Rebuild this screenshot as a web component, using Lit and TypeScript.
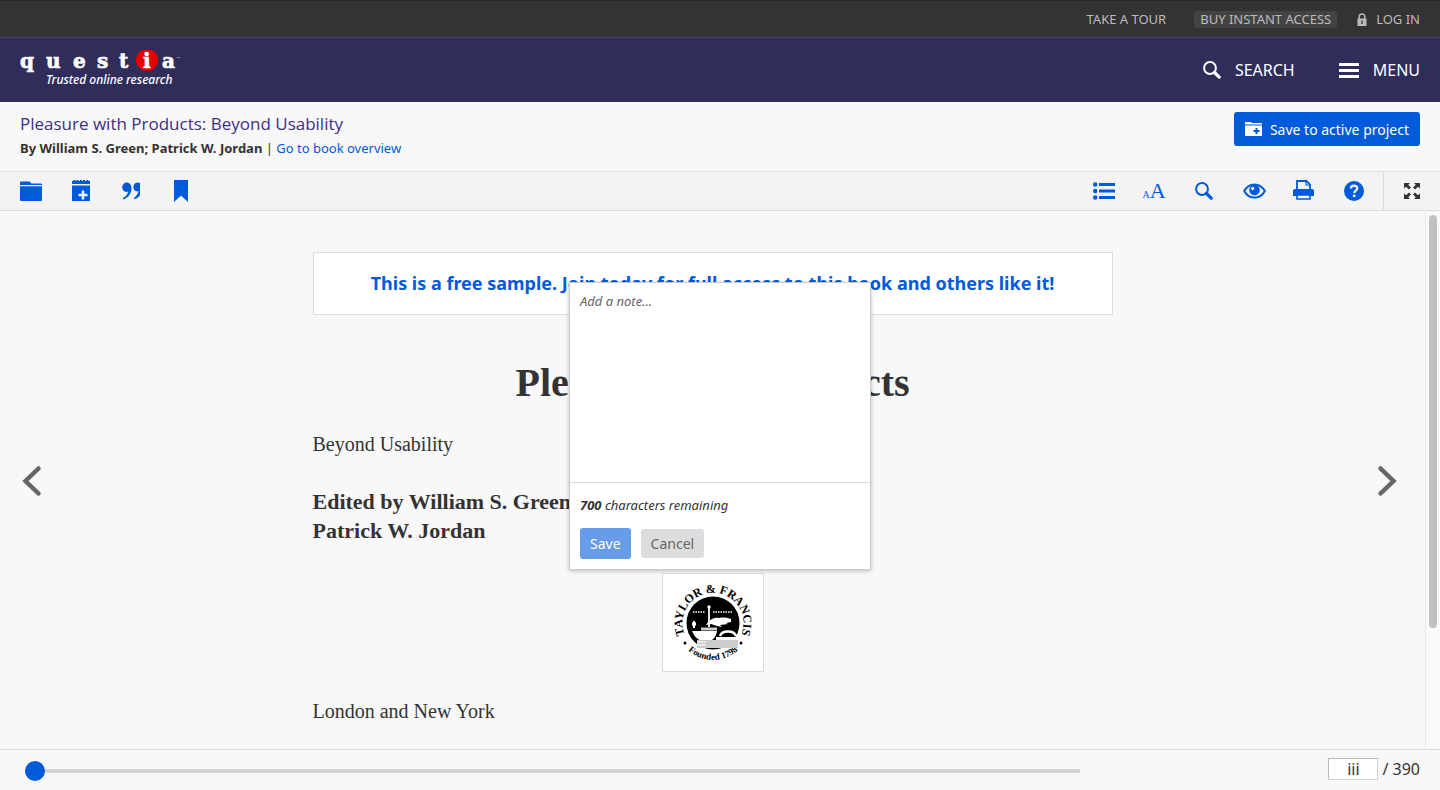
import { LitElement, html, css, svg } from "lit";
import { customElement, state } from "lit/decorators.js";

const MAX_NOTE = 700;

const icons = {
  folder: svg`<svg width="22" height="20" viewBox="0 0 22 20" fill="currentColor"><path d="M1 .5h8.500l2 2H21a1 1 0 0 1 1 1v.5H0V1.500a1 1 0 0 1 1-1zM0 5.300h22V19a1 1 0 0 1-1 1H1a1 1 0 0 1-1-1z"/></svg>`,
  note: svg`<svg width="18" height="22" viewBox="0 0 18 22" fill="currentColor"><path d="M0 1h1.500V0h2v1h1V0h2v1h1.500V0h2v1h1V0h2v1h1.500V0h2v1H18v3H0zM0 5.500h18V21H0z"/><path d="M11 10.500v9M6.500 15h9" stroke="#f3f3f3" stroke-width="2.500"/></svg>`,
  quote: svg`<svg width="18" height="20" viewBox="0 0 18 20" fill="currentColor"><path d="M4.800 1.500C7.500 1.500 9.500 3.800 9.500 7.300c0 5.500-3.500 9.700-8 11.200l-.7-1.200c3.200-1.700 4.900-3.800 5.200-6.700-.5.200-1 .3-1.700.3A4.300 4.300 0 0 1 .3 6.300c0-2.700 2-4.800 4.500-4.800z"/><path d="M16 1.500c-3 0-4.600 2-4.600 4.600s1.600 4.300 3.600 4.300c.6 0 1-.1 1.400-.3-.2 2.900-2 5-4.600 6.900l.7 1.200c2.400-.8 4.200-2.100 5.500-4V1.900a6 6 0 0 0-2-.4z"/></svg>`,
  bookmark: svg`<svg width="14" height="22" viewBox="0 0 14 22" fill="currentColor"><path d="M0 0h14v22l-7-6.500L0 22z"/></svg>`,
  list: svg`<svg width="22" height="18" viewBox="0 0 22 18" fill="currentColor"><circle cx="2.200" cy="2.500" r="2.200"/><circle cx="2.200" cy="9" r="2.200"/><circle cx="2.200" cy="15.500" r="2.200"/><path d="M6 1h16v3H6zM6 7.500h16v3H6zM6 14h16v3H6z"/></svg>`,
  search: svg`<svg width="18" height="18" viewBox="0 0 18 18" fill="none" stroke="currentColor"><circle cx="7" cy="7" r="5.900" stroke-width="2"/><path d="M11.500 11.500l4.700 4.700" stroke-width="3.200" stroke-linecap="round"/></svg>`,
  eye: svg`<svg width="23" height="16" viewBox="0 0 23 16"><path d="M1.200 8C6-.8 17-.8 21.800 8 17 16.800 6 16.800 1.200 8z" fill="none" stroke="currentColor" stroke-width="2"/><circle cx="11.500" cy="7" r="5.300" fill="currentColor"/><circle cx="9.700" cy="5.500" r="1.700" fill="#f3f3f3"/></svg>`,
  print: svg`<svg width="22" height="22" viewBox="0 0 22 22"><path d="M4 11V1h9.500L17 4.500V11" fill="none" stroke="currentColor" stroke-width="1.800"/><path d="M13 1v4h4" fill="none" stroke="currentColor" stroke-width="1.200"/><path d="M2 9h17a2 2 0 0 1 2 2v5H0v-5a2 2 0 0 1 2-2z" fill="currentColor"/><path d="M4 15h13v4H4z" fill="#f3f3f3" stroke="currentColor" stroke-width="1.600"/></svg>`,
  help: svg`<svg width="20" height="20" viewBox="0 0 20 20"><circle cx="10" cy="10" r="10" fill="currentColor"/><path d="M6.900 7.600c0-1.800 1.300-2.900 3.100-2.900s3.200 1 3.200 2.700c0 2.300-2.900 2.300-2.900 4.500" fill="none" stroke="#f3f3f3" stroke-width="2.300"/><circle cx="10.200" cy="14.700" r="1.500" fill="#f3f3f3"/></svg>`,
  full: svg`<svg width="16" height="16" viewBox="0 0 16 16"><path d="M0 0h6L4.200 1.800l2.800 2.700L5 6.500 2 3.800 0 5.500zM16 0v5.500l-2-1.700-3 2.700-2-2 2.800-2.700L10 0zM0 16v-5.500l2 1.700 3-2.700 2 2-2.800 2.700L6 16zM16 16h-6l1.800-1.800L9 11.500l2-2 3 2.700 2-1.700z" fill="currentColor"/></svg>`,
  lock: svg`<svg width="10" height="13" viewBox="0 0 10 13"><path d="M2.200 6V3.700a2.800 2.800 0 0 1 5.600 0V6" fill="none" stroke="currentColor" stroke-width="1.500"/><path d="M.5 5.500h9V13h-9z" fill="currentColor"/><path d="M5 7.500v3.500" stroke="#333" stroke-width="1.300"/></svg>`,
  menu: svg`<svg width="20" height="15" viewBox="0 0 20 15"><path d="M0 0h20v3H0zM0 6h20v3H0zM0 12h20v3H0z" fill="currentColor"/></svg>`,
  saveFolder: svg`<svg width="17" height="14" viewBox="0 0 17 14"><path d="M0 0h5.500L7 1h10v1.500H0zM0 3.500h17V14H0z" fill="#fff"/><path d="M11.500 6v6M8.500 9h6" stroke="#005ad9" stroke-width="2"/></svg>`,
  prev: svg`<svg width="20" height="32" viewBox="0 0 20 32"><path d="M16.500 3.500L3.500 16l13 12.500" fill="none" stroke="#666" stroke-width="4.500" stroke-linecap="round"/></svg>`,
  next: svg`<svg width="20" height="32" viewBox="0 0 20 32"><path d="M3.500 3.500L16.500 16l-13 12.500" fill="none" stroke="#666" stroke-width="4.500" stroke-linecap="round"/></svg>`,
  logo: svg`<svg width="164" height="40" viewBox="0 0 164 40" role="img" aria-label="questia, trusted online research">
    <circle cx="127" cy="10" r="11" fill="#e60000"/>
    <g fill="#fff" stroke="#fff" stroke-width="0.700" font-family="DejaVu Serif, serif" font-weight="700" font-size="20">
      <text y="18" x="0 26 53 77 99 123 142">questia</text>
    </g>
    <text x="157" y="8" fill="#fff" font-size="2" font-family="Noto Sans, sans-serif">TM</text>
    <text x="26" y="34" fill="#fff" font-size="12" font-weight="500" font-style="italic" font-family="Noto Sans, sans-serif">Trusted online research</text>
  </svg>`,
  seal: svg`<svg width="100" height="97" viewBox="0 0 100 97" role="img" aria-label="Taylor &amp; Francis, founded 1798">
    <defs><path id="arc-top" d="M27.200 69.500A30.500 30.500 0 1 1 72.800 69.500"/><path id="arc-low" d="M20 70.600A37 37 0 0 0 80 70.600"/></defs>
    <circle cx="50" cy="49" r="26.500" fill="#000"/>
    <g font-family="Liberation Serif, serif" fill="#000" font-weight="700">
      <text font-size="12"><textPath href="#arc-top" startOffset="50%" text-anchor="middle">TAYLOR &amp; FRANCIS</textPath></text>
      <text font-size="9"><textPath href="#arc-low" startOffset="50%" text-anchor="middle">Founded 1798</textPath></text>
    </g>
    <circle cx="22" cy="69" r="1.500"/><circle cx="78" cy="69" r="1.500"/>
    <path d="M30 38h12M50 38h20" stroke="#fff" stroke-width="1.500" stroke-dasharray="1.500 1"/>
    <path d="M46 33v20" stroke="#fff" stroke-width="1.800"/><circle cx="46" cy="33" r="1.700" fill="#fff"/>
    <path d="M45 48c3-3 7-5 11-4 5-1 9 0 12 1v3l-5 1 2 1-8 1 2 2-5-1-6-2-5 1z" fill="#fff"/>
    <path d="M31 47v7" stroke="#fff" stroke-width="2"/><circle cx="31" cy="50" r="2.200" fill="#fff"/>
    <path d="M29 57h25c-1 6-4 9-7 10H38c-4-2-7-5-9-10z" fill="#fff"/>
    <path d="M38 55h16" stroke="#ccc" stroke-width="3"/>
    <path d="M57 62c2-6 14-6 16 0" fill="none" stroke="#fff" stroke-width="2.500"/><path d="M53 63h21v3H53z" fill="#fff"/>
    <path d="M34 66h41v8H34z" fill="#ccc"/><path d="M34 68h9M34 71h9" stroke="#fff"/>
  </svg>`,
};

@customElement("app-root")
export class AppRoot extends LitElement {
  static styles = css`
    :host { display: flex; flex-direction: column; height: 100vh; overflow: hidden; background: #f8f8f8; color: #333; font-family: "Noto Sans", "Open Sans", sans-serif; font-size: 13px; }
    *, *::before { box-sizing: border-box; }
    a { color: inherit; text-decoration: none; }
    button { font: inherit; color: inherit; background: none; border: 0; padding: 0; cursor: pointer; }
    svg { display: block; flex: none; }
    .top { display: flex; justify-content: flex-end; align-items: center; gap: 20px; height: 37px; padding: 0 20px; background: #333; border-top: 1px solid #262626; color: #bbb; line-height: 17px; }
    .buy { background: #434343; border-radius: 3px; padding: 0 6px; margin-left: 8px; }
    .login { display: flex; align-items: center; gap: 9px; }
    .brand { display: flex; align-items: center; height: 65px; padding: 0 20px; background: #302d5b; border-top: 1px solid #434078; color: #fff; font-size: 16px; }
    .brand nav { display: flex; gap: 44px; margin-left: auto; }
    .brand nav a { display: flex; align-items: center; gap: 14px; }
    .book { display: flex; align-items: flex-start; justify-content: space-between; padding: 10px 20px 11px; }
    .title { margin: 0; font-family: "Open Sans", sans-serif; font-size: 17px; font-weight: 400; line-height: 24px; color: #3e2e85; }
    .byline { margin: 0; line-height: 24px; }
    .byline a { color: #005ad9; }
    .save { display: flex; align-items: center; gap: 8px; height: 34px; padding: 0 11px; border-radius: 3px; background: #005ad9; color: #fff; font-size: 14px; }
    .tools { display: flex; height: 40px; background: #f3f3f3; border: solid #dbdbdb; border-width: 1px 0; color: #005ad9; }
    .tools button { display: flex; align-items: center; justify-content: center; width: 50px; }
    .left { display: flex; padding-left: 6px; }
    .right { display: flex; margin-left: auto; padding-right: 4px; }
    .tools .full { width: 57px; border-left: 1px solid #dbdbdb; color: #333; }
    .size { font-family: "Liberation Serif", serif; font-size: 22px; }
    .size small { font-size: 10px; }
    .reader { position: relative; flex: 1; min-height: 0; display: grid; grid-template-columns: minmax(0, 1fr) 15px; overflow: hidden; }
    .stage { display: grid; grid-template-columns: 26px minmax(0, 800px) 26px; justify-content: space-between; padding: 0 22px; overflow: hidden; }
    .turn { align-self: center; justify-self: start; padding-bottom: 4px; }
    .page { padding-top: 41px; font-family: Georgia, "Liberation Serif", serif; font-size: 20px; line-height: 29px; }
    .sample { display: block; border: 1px solid #dbdbdb; background: #fff; padding: 16px; text-align: center; color: #005ad9; font: 700 18px/29px "Noto Sans", "Open Sans", sans-serif; }
    h1 { margin: 49px 0 28px; font-size: 40px; line-height: 38px; text-align: center; }
    .page p { margin: 0 0 28px; }
    .page .editors { font-size: 22px; font-weight: 700; }
    .seal { display: table; margin: 0 auto 25px; border: 1px solid #dbdbdb; background: #fff; }
    .track { padding: 4px 3px; background: #fafafa; border-left: 1px solid #e8e8e8; }
    .thumb { height: 78%; width: 8px; border-radius: 4px; background: #c1c1c1; }
    .popup { position: absolute; top: 71px; left: calc(50% - 151px); width: 302px; background: #fff; border: 1px solid #ccc; box-shadow: 0 1px 4px rgba(0, 0, 0, 0.25); }
    .popup textarea { display: block; width: 100%; height: 200px; padding: 10px; border: 0; border-bottom: 1px solid #dbdbdb; outline: 0; resize: none; background: #fff; color: #333; font: italic 13px/17px "Noto Sans", "Open Sans", sans-serif; }
    .popup textarea::placeholder { color: #666; opacity: 1; }
    .foot { padding: 10px; line-height: 24px; }
    .count { margin: 0 0 11px; font-style: italic; }
    .actions { display: flex; align-items: center; gap: 10px; font-size: 14px; }
    .ok { height: 31px; padding: 0 10px; border-radius: 3px; background: #669ce8; color: #fff; }
    .no { height: 29px; padding: 0 10px; border-radius: 3px; background: #ddd; color: #666; }
    .pager { display: flex; align-items: center; justify-content: space-between; height: 41px; padding: 0 20px 3px 25px; border-top: 1px solid #dbdbdb; font-size: 16px; }
    .range { appearance: none; width: calc(75% + 9px); height: 20px; margin: 4px 0 0; background: linear-gradient(#d4d4d4, #d4d4d4) center / 100% 4px no-repeat; }
    .range::-webkit-slider-thumb { appearance: none; width: 20px; height: 20px; border-radius: 50%; background: #005ad9; }
    .pageno { display: flex; align-items: center; gap: 4px; }
    .pageno input { width: 50px; height: 22px; padding: 0; border: 1px solid; border-color: #bbb #d4d4d4 #d4d4d4 #bbb; background: #fff; color: #333; text-align: center; font: inherit; }
  `;

  @state() private note = "";

  private tool(label: string, icon: unknown, cls = "") {
    return html`<button class=${cls} aria-label=${label} title=${label}>${icon}</button>`;
  }

  render() {
    return html`
      <nav class="top" aria-label="Account">
        <a href="#tour">TAKE A TOUR</a>
        <a class="buy" href="#buy">BUY INSTANT ACCESS</a>
        <a class="login" href="#login">${icons.lock}LOG IN</a>
      </nav>
      <header class="brand">
        <a href="#home">${icons.logo}</a>
        <nav aria-label="Site">
          <a href="#search">${icons.search}SEARCH</a>
          <a href="#menu">${icons.menu}MENU</a>
        </nav>
      </header>
      <section class="book">
        <div>
          <h2 class="title">Pleasure with Products: Beyond Usability</h2>
          <p class="byline"><b>By William S. Green; Patrick W. Jordan</b> | <a href="#overview">Go to book overview</a></p>
        </div>
        <button class="save">${icons.saveFolder}Save to active project</button>
      </section>
      <div class="tools" role="toolbar" aria-label="Reader tools">
        <div class="left">
          ${this.tool("Projects", icons.folder)}${this.tool("Add note", icons.note)}${this.tool("Cite", icons.quote)}${this.tool("Bookmark", icons.bookmark)}
        </div>
        <div class="right">
          ${this.tool("Contents", icons.list)}${this.tool("Text size", html`<span class="size"><small>A</small>A</span>`)}${this.tool("Search in book", icons.search)}${this.tool("View", icons.eye)}${this.tool("Print", icons.print)}${this.tool("Help", icons.help)}
        </div>
        ${this.tool("Full screen", icons.full, "full")}
      </div>
      <main class="reader">
        <div class="stage">
          ${this.tool("Previous page", icons.prev, "turn")}
          <article class="page">
            <a class="sample" href="#join">This is a free sample. Join today for full access to this book and others like it!</a>
            <h1>Pleasure with Products</h1>
            <p>Beyond Usability</p>
            <p class="editors">Edited by William S. Green<br />Patrick W. Jordan</p>
            <div class="seal">${icons.seal}</div>
            <p>London and New York</p>
          </article>
          ${this.tool("Next page", icons.next, "turn")}
        </div>
        <div class="track"><div class="thumb"></div></div>
        <form class="popup" @submit=${(e: Event) => e.preventDefault()}>
          <textarea aria-label="Note" placeholder="Add a note..." maxlength=${MAX_NOTE} .value=${this.note}
            @input=${(e: Event) => (this.note = (e.target as HTMLTextAreaElement).value)}></textarea>
          <div class="foot">
            <p class="count"><b>${MAX_NOTE - this.note.length}</b> characters remaining</p>
            <div class="actions"><button class="ok">Save</button><button class="no" type="button">Cancel</button></div>
          </div>
        </form>
      </main>
      <footer class="pager">
        <input class="range" type="range" min="1" max="390" value="1" aria-label="Page position" />
        <label class="pageno"><input type="text" value="iii" aria-label="Page" /><span>/ 390</span></label>
      </footer>
    `;
  }
}
